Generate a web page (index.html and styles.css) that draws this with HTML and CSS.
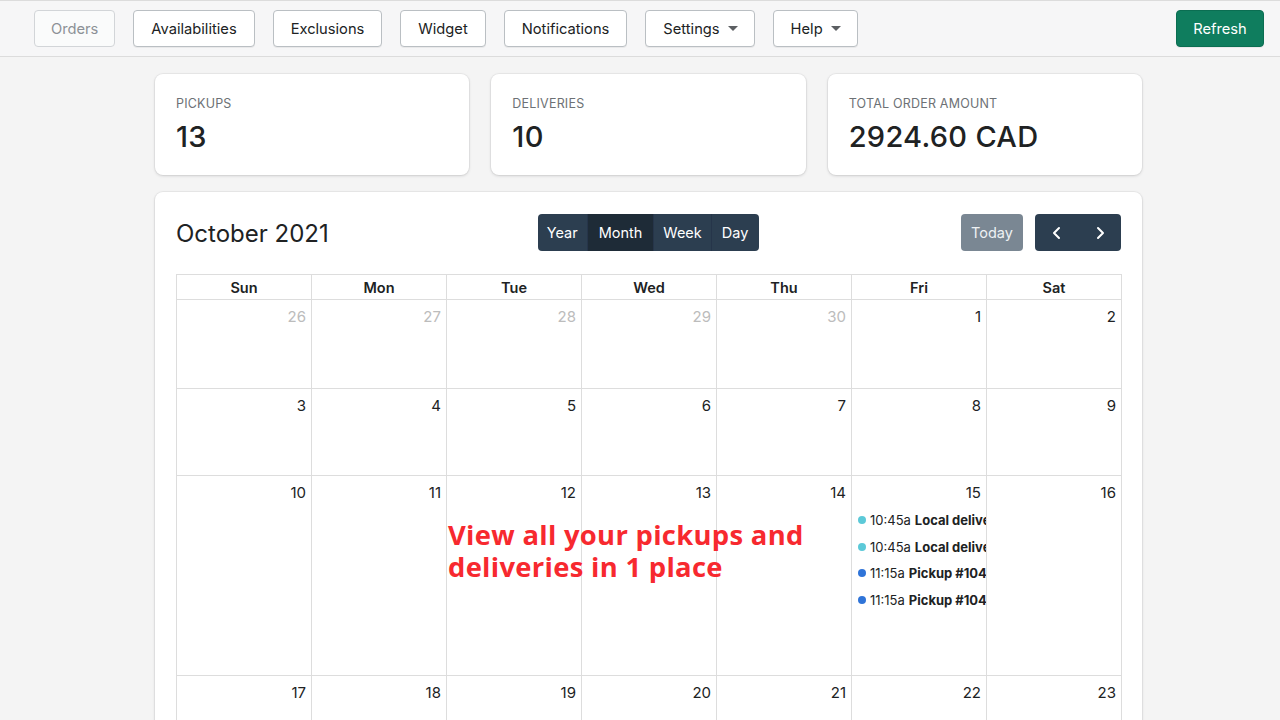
FILE: index.html
```html
<!DOCTYPE html>
<html>
<head>
<meta charset="utf-8">
<link rel="stylesheet" href="styles.css">
</head>
<body>
<header class="topbar">
  <nav class="nav">
    <button class="btn btn-disabled">Orders</button>
    <button class="btn">Availabilities</button>
    <button class="btn">Exclusions</button>
    <button class="btn">Widget</button>
    <button class="btn">Notifications</button>
    <button class="btn">Settings <span class="caret"></span></button>
    <button class="btn">Help <span class="caret"></span></button>
  </nav>
  <button class="btn btn-primary">Refresh</button>
</header>
<main class="main">
  <section class="stats">
    <div class="card stat">
      <div class="stat-label">PICKUPS</div>
      <div class="stat-value">13</div>
    </div>
    <div class="card stat">
      <div class="stat-label">DELIVERIES</div>
      <div class="stat-value">10</div>
    </div>
    <div class="card stat">
      <div class="stat-label">TOTAL ORDER AMOUNT</div>
      <div class="stat-value">2924.60 CAD</div>
    </div>
  </section>
  <section class="card calendar">
    <div class="cal-toolbar">
      <h2 class="cal-title">October 2021</h2>
      <div class="btn-group">
        <button class="cbtn">Year</button>
        <button class="cbtn active">Month</button>
        <button class="cbtn">Week</button>
        <button class="cbtn">Day</button>
      </div>
      <div class="cal-nav">
        <button class="cbtn today">Today</button>
        <div class="btn-group arrows">
          <button class="cbtn arrow"><svg width="12" height="14" viewBox="0 0 12 14"><path d="M8 2 L3 7 L8 12" fill="none" stroke="#fff" stroke-width="2" stroke-linecap="round" stroke-linejoin="round"/></svg></button>
          <button class="cbtn arrow"><svg width="12" height="14" viewBox="0 0 12 14"><path d="M4 2 L9 7 L4 12" fill="none" stroke="#fff" stroke-width="2" stroke-linecap="round" stroke-linejoin="round"/></svg></button>
        </div>
      </div>
    </div>
    <div class="grid-wrap">
      <table class="cal-grid">
        <thead>
          <tr><th>Sun</th><th>Mon</th><th>Tue</th><th>Wed</th><th>Thu</th><th>Fri</th><th>Sat</th></tr>
        </thead>
        <tbody>
          <tr class="r1">
            <td class="other"><div class="dnum">26</div></td>
            <td class="other"><div class="dnum">27</div></td>
            <td class="other"><div class="dnum">28</div></td>
            <td class="other"><div class="dnum">29</div></td>
            <td class="other"><div class="dnum">30</div></td>
            <td><div class="dnum">1</div></td>
            <td><div class="dnum">2</div></td>
          </tr>
          <tr class="r2">
            <td><div class="dnum">3</div></td>
            <td><div class="dnum">4</div></td>
            <td><div class="dnum">5</div></td>
            <td><div class="dnum">6</div></td>
            <td><div class="dnum">7</div></td>
            <td><div class="dnum">8</div></td>
            <td><div class="dnum">9</div></td>
          </tr>
          <tr class="r3">
            <td><div class="dnum">10</div></td>
            <td><div class="dnum">11</div></td>
            <td><div class="dnum">12</div></td>
            <td><div class="dnum">13</div></td>
            <td><div class="dnum">14</div></td>
            <td>
              <div class="dnum">15</div>
              <div class="events">
                <div class="event"><span class="dot teal"></span>10:45a <b>Local delivery #1041</b></div>
                <div class="event"><span class="dot teal"></span>10:45a <b>Local delivery #1042</b></div>
                <div class="event"><span class="dot blue"></span>11:15a <b>Pickup #1043</b></div>
                <div class="event"><span class="dot blue"></span>11:15a <b>Pickup #1044</b></div>
              </div>
            </td>
            <td><div class="dnum">16</div></td>
          </tr>
          <tr class="r4">
            <td><div class="dnum">17</div></td>
            <td><div class="dnum">18</div></td>
            <td><div class="dnum">19</div></td>
            <td><div class="dnum">20</div></td>
            <td><div class="dnum">21</div></td>
            <td><div class="dnum">22</div></td>
            <td><div class="dnum">23</div></td>
          </tr>
        </tbody>
      </table>
      <div class="promo">View all your pickups and<br>deliveries in 1 place</div>
    </div>
  </section>
</main>
</body>
</html>
```

FILE: styles.css
```css
* { box-sizing: border-box; }
html, body { margin: 0; padding: 0; }
body {
  background: #f4f4f4;
  font-family: Inter, "Noto Sans", "Liberation Sans", sans-serif;
  color: #202223;
  width: 1280px;
  height: 720px;
  overflow: hidden;
}
.topbar {
  height: 57px;
  display: flex;
  align-items: center;
  justify-content: space-between;
  padding: 0 16px 0 34px;
  border-top: 1px solid #dcdcdc;
  border-bottom: 1px solid #dcdcdc;
  background: #f6f6f7;
}
.nav { display: flex; gap: 18px; }
.btn {
  height: 37px;
  padding: 0 17px;
  font-family: inherit;
  font-size: 14.7px;
  color: #202223;
  background: #fff;
  border: 1px solid #babfc3;
  border-radius: 4px;
  box-shadow: 0 1px 0 rgba(0,0,0,0.05);
  display: inline-flex;
  align-items: center;
  gap: 8px;
}
.btn-disabled {
  color: #8c9196;
  background: #fafbfb;
  border-color: #d2d5d8;
  box-shadow: none;
  padding: 0 16px;
}
.caret {
  width: 0; height: 0;
  border-left: 5px solid transparent;
  border-right: 5px solid transparent;
  border-top: 5px solid #5c5f62;
  margin-right: -1px;
}
.btn-primary {
  background: #0f7d5e;
  border-color: #0b6e52;
  color: #fff;
  padding: 0 16px;
  width: 88px;
  justify-content: center;
}
.main {
  width: 987px;
  margin-left: 155px;
  padding-top: 17px;
}
.stats {
  display: grid;
  grid-template-columns: repeat(3, 1fr);
  gap: 22px;
}
.card {
  background: #fff;
  border-radius: 8px;
  box-shadow: 0 0 0 1px rgba(63,63,68,0.05), 0 1px 3px rgba(63,63,68,0.18);
}
.stat {
  height: 101px;
  padding: 22px 21px;
}
.stat-label {
  font-size: 12.5px;
  color: #6d7175;
  letter-spacing: 0.2px;
  line-height: 16px;
}
.stat-value {
  font-size: 29px;
  font-weight: 500;
  margin-top: 8px;
  line-height: 34px;
  letter-spacing: 0.3px;
}
.calendar {
  margin-top: 17px;
  padding: 21px 21px;
  height: 560px;
}
.cal-toolbar {
  display: grid;
  grid-template-columns: 1fr auto 1fr;
  align-items: center;
  height: 37px;
  margin-top: 1px;
}
.cal-title {
  margin: 0;
  margin-top: 2px;
  font-size: 24px;
  font-weight: 400;
  color: #202223;
}
.btn-group {
  display: flex;
  border-radius: 4px;
  overflow: hidden;
}
.cbtn {
  height: 37px;
  border: 0;
  font-family: inherit;
  font-size: 14.5px;
  color: #fff;
  background: #2c3e50;
  padding: 0 9px;
  border-left: 1px solid #26354a;
}
.cbtn:first-child { border-left: 0; }
.cbtn:last-child { padding: 0 11px 0 10px; }
.cbtn.active { background: #1e2b37; padding: 0 11px; }
.cal-nav {
  display: flex;
  justify-content: flex-end;
  gap: 12px;
}
.today {
  background: #7a8793;
  border-radius: 4px;
  color: #eef1f3;
  padding: 0 10px;
  width: 62px;
}
.arrows .arrow {
  width: 43px;
  padding: 0;
  display: flex;
  align-items: center;
  justify-content: center;
  border-left: 0;
}
.grid-wrap {
  position: relative;
  margin-top: 23px;
}
.cal-grid {
  width: 946px;
  border-collapse: collapse;
  table-layout: fixed;
}
.cal-grid th, .cal-grid td {
  border: 1px solid #dddddd;
}
.cal-grid th {
  height: 25px;
  font-size: 14.5px;
  font-weight: 600;
  text-align: center;
  padding: 0;
}
.cal-grid td {
  vertical-align: top;
  padding: 0;
}
.r1 td { height: 89px; }
.r2 td { height: 87px; }
.r3 td { height: 200px; }
.r4 td { height: 89px; }
.dnum {
  text-align: right;
  font-size: 15px;
  padding: 7px 5px 0 0;
  line-height: 20px;
  color: #202223;
}
.other .dnum { color: #bcbcbc; }
.events {
  margin-top: 7px;
  padding-left: 6px;
  display: flex;
  flex-direction: column;
  gap: 6.5px;
}
.event {
  font-size: 13px;
  line-height: 20px;
  white-space: nowrap;
  overflow: hidden;
  color: #202223;
  display: flex;
  align-items: center;
}
.event b { font-weight: 700; margin-left: 4px; }
.dot {
  width: 8px; height: 8px;
  border-radius: 50%;
  margin-right: 4px;
  flex: none;
}
.dot.teal { background: #5cc9d8; }
.dot.blue { background: #2f74d8; }
.promo {
  position: absolute;
  left: 272px;
  top: 245px;
  font-family: "Open Sans", Inter, sans-serif;
  font-weight: 700;
  font-size: 27.4px;
  line-height: 32px;
  color: #f7292f;
  letter-spacing: 0.3px;
}
```
